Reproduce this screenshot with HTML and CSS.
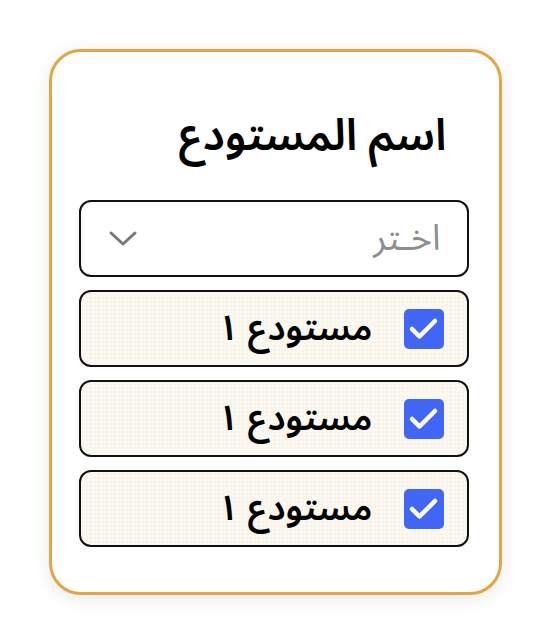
FILE: index.html
```html
<!DOCTYPE html>
<html lang="ar" dir="rtl">
<head>
    <meta charset="UTF-8">
    <meta name="viewport" content="width=device-width, initial-scale=1.0">
    <title>اسم المستودع</title>
    <link rel="stylesheet" href="styles.css">
</head>
<body>
    <div class="card">
        <h2 class="card-title">اسم المستودع</h2>
        <div class="select-box">
            <span class="placeholder">اخـتر</span>
            <svg class="chevron" width="30" height="18" viewBox="0 0 30 18">
                <polyline points="3,3 15,14 27,3" fill="none" stroke="#777" stroke-width="3" stroke-linecap="round" stroke-linejoin="round"/>
            </svg>
        </div>
        <ul class="options">
            <li class="option">
                <span class="check">
                    <svg width="40" height="40" viewBox="0 0 40 40">
                        <polyline points="8,20 15.5,27.5 31,12" fill="none" stroke="#fff" stroke-width="4.5" stroke-linecap="round" stroke-linejoin="round"/>
                    </svg>
                </span>
                <span class="option-label">مستودع ١</span>
            </li>
            <li class="option">
                <span class="check">
                    <svg width="40" height="40" viewBox="0 0 40 40">
                        <polyline points="8,20 15.5,27.5 31,12" fill="none" stroke="#fff" stroke-width="4.5" stroke-linecap="round" stroke-linejoin="round"/>
                    </svg>
                </span>
                <span class="option-label">مستودع ١</span>
            </li>
            <li class="option">
                <span class="check">
                    <svg width="40" height="40" viewBox="0 0 40 40">
                        <polyline points="8,20 15.5,27.5 31,12" fill="none" stroke="#fff" stroke-width="4.5" stroke-linecap="round" stroke-linejoin="round"/>
                    </svg>
                </span>
                <span class="option-label">مستودع ١</span>
            </li>
        </ul>
    </div>
</body>
</html>
```

FILE: styles.css
```css
body {
    font-family: 'Noto Sans Arabic', 'Noto Sans', 'DejaVu Sans', sans-serif;
    background-color: #ffffff;
    color: #000000;
    display: flex;
    justify-content: center;
    align-items: center;
    height: 100vh;
    margin: 0;
}

.card {
    box-sizing: border-box;
    width: 453px;
    height: 546px;
    background-color: #ffffff;
    border: 3px solid #e2a745;
    border-radius: 32px;
    padding: 28px 30px 0 27px;
    box-shadow: 0 4px 18px rgba(0, 0, 0, 0.09);
}

.card-title {
    margin: 0 0 34px;
    padding: 27px 22px 0 0;
    font-size: 44px;
    font-weight: 600;
    line-height: 59px;
}

.select-box {
    box-sizing: border-box;
    height: 77px;
    display: flex;
    justify-content: space-between;
    align-items: center;
    padding: 0 26px 0 27px;
    border: 2px solid #111111;
    border-radius: 12px;
    margin-bottom: 13px;
}

.placeholder {
    font-size: 36px;
    color: #8e8e8e;
    line-height: 1;
}

.options {
    list-style-type: none;
    margin: 0;
    padding: 0;
    display: flex;
    flex-direction: column;
    gap: 13px;
}

.option {
    box-sizing: border-box;
    height: 77px;
    display: flex;
    align-items: center;
    gap: 31px;
    padding: 0 23px;
    border: 2px solid #111111;
    border-radius: 12px;
    background-color: #fbf8f0;
    background-image: radial-gradient(rgba(0, 0, 0, 0.035) 0.6px, transparent 0.8px);
    background-size: 4px 4px;
}

.check {
    width: 40px;
    height: 40px;
    border-radius: 5px;
    background-color: #4166f5;
    display: flex;
}

.option-label {
    font-size: 36px;
    font-weight: 600;
    line-height: 1;
}
```
